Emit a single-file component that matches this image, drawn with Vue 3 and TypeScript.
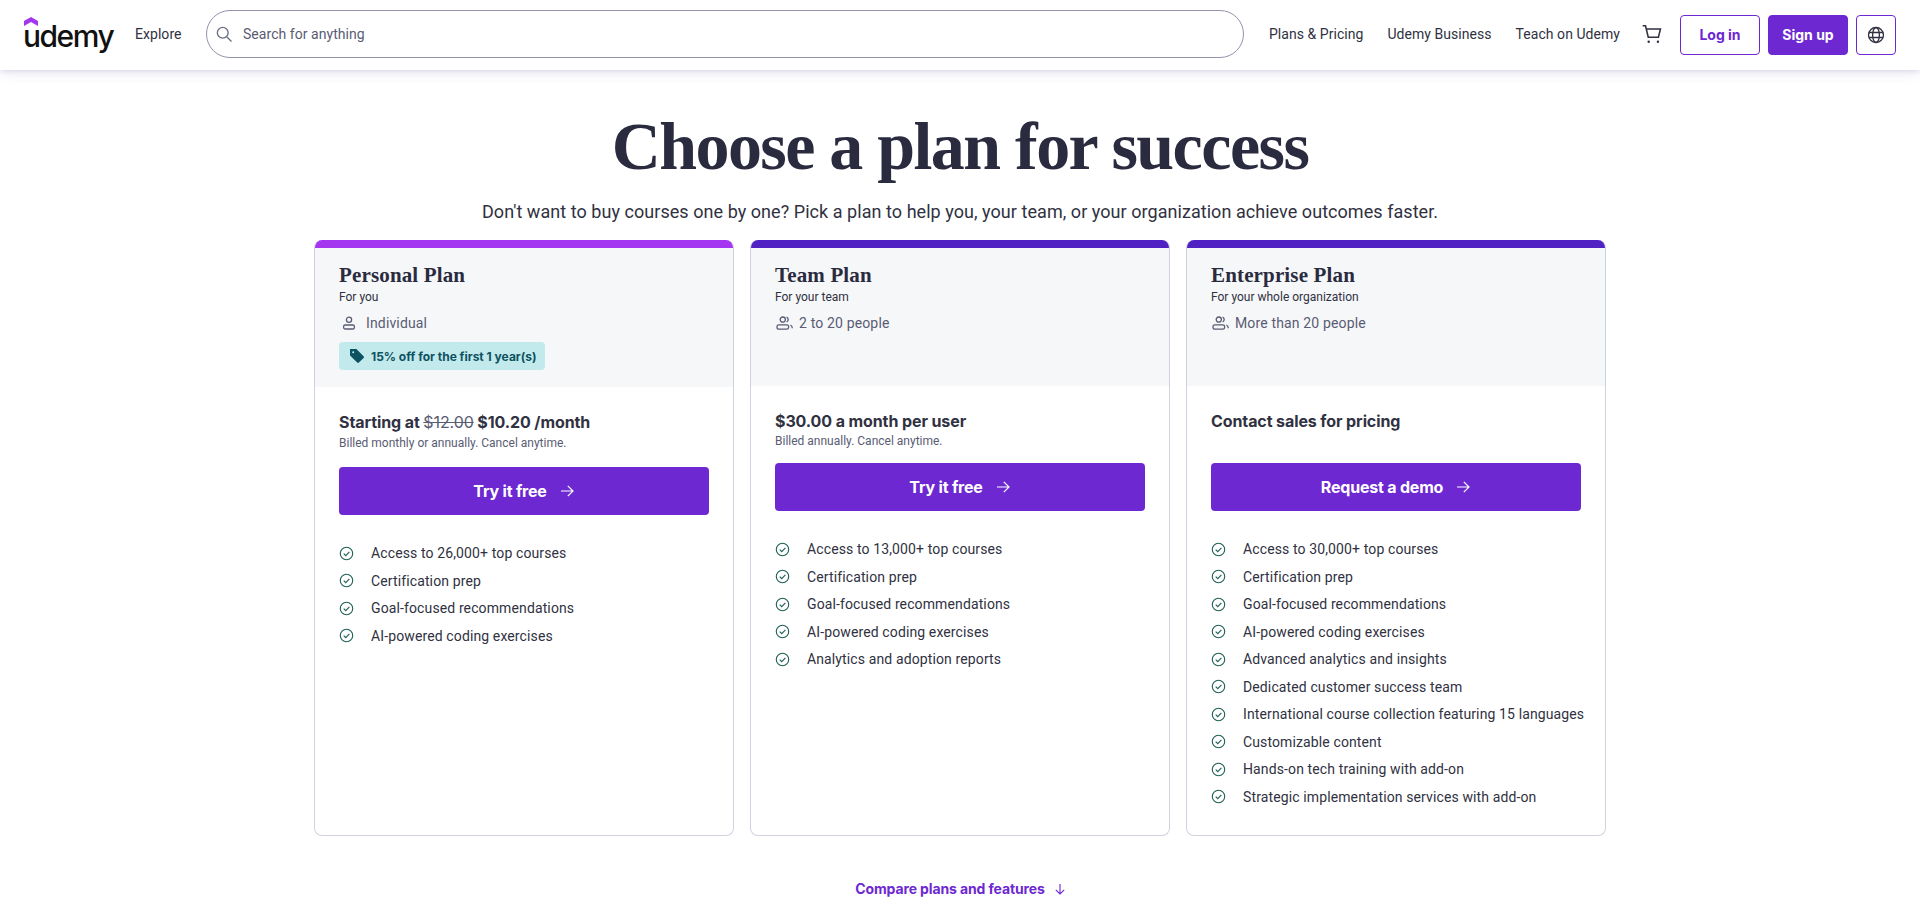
<script setup lang="ts">
interface Plan {
  name: string;
  audience: string;
  seats: string;
  solo: boolean;
  accent: string;
  badge?: string;
  cta: string;
  billed?: string;
  features: string[];
}

const plans: Plan[] = [
  {
    name: 'Personal Plan',
    audience: 'For you',
    seats: 'Individual',
    solo: true,
    accent: '#a435f0',
    badge: '15% off for the first 1 year(s)',
    cta: 'Try it free',
    billed: 'Billed monthly or annually. Cancel anytime.',
    features: [
      'Access to 26,000+ top courses',
      'Certification prep',
      'Goal-focused recommendations',
      'AI-powered coding exercises',
    ],
  },
  {
    name: 'Team Plan',
    audience: 'For your team',
    seats: '2 to 20 people',
    solo: false,
    accent: '#5022c3',
    cta: 'Try it free',
    billed: 'Billed annually. Cancel anytime.',
    features: [
      'Access to 13,000+ top courses',
      'Certification prep',
      'Goal-focused recommendations',
      'AI-powered coding exercises',
      'Analytics and adoption reports',
    ],
  },
  {
    name: 'Enterprise Plan',
    audience: 'For your whole organization',
    seats: 'More than 20 people',
    solo: false,
    accent: '#5022c3',
    cta: 'Request a demo',
    features: [
      'Access to 30,000+ top courses',
      'Certification prep',
      'Goal-focused recommendations',
      'AI-powered coding exercises',
      'Advanced analytics and insights',
      'Dedicated customer success team',
      'International course collection featuring 15 languages',
      'Customizable content',
      'Hands-on tech training with add-on',
      'Strategic implementation services with add-on',
    ],
  },
];
</script>

<template>
  <div class="page">
    <header class="topbar">
      <a class="logo">
        <svg class="logo-mark" width="14" height="9" viewBox="0 0 14 9"><path d="M7 0l7 4v5L7 5 0 9V4z" fill="#a435f0" /></svg>
        <span class="logo-text">udemy</span>
      </a>
      <span class="nav-link explore">Explore</span>
      <div class="search">
        <svg width="20" height="20" viewBox="0 0 24 24" fill="none" stroke="#6a6f85" stroke-width="1.6"><circle cx="10.5" cy="10.5" r="6.5" /><path d="M15.5 15.5L21 21" /></svg>
        <span class="placeholder">Search for anything</span>
      </div>
      <nav class="links">
        <span class="nav-link">Plans &amp; Pricing</span>
        <span class="nav-link">Udemy Business</span>
        <span class="nav-link">Teach on Udemy</span>
      </nav>
      <svg class="cart" width="22" height="22" viewBox="0 0 20 20" fill="none" stroke="#303141" stroke-width="1.4"><path d="M1.5 2.5h2.6L6.6 13h9.2l1.9-7.6H5" /><circle cx="7" cy="17" r="1.1" fill="#303141" stroke="none" /><circle cx="15.4" cy="17" r="1.1" fill="#303141" stroke="none" /></svg>
      <button class="btn-outline login">Log in</button>
      <button class="btn-solid signup">Sign up</button>
      <button class="btn-outline globe">
        <svg width="18" height="18" viewBox="0 0 18 18" fill="none" stroke="#303141" stroke-width="1.3"><circle cx="9" cy="9" r="7.5" /><ellipse cx="9" cy="9" rx="3.4" ry="7.5" /><path d="M1.8 6.5h14.4M1.8 11.5h14.4" /></svg>
      </button>
    </header>

    <main class="content">
      <h1 class="title">Choose a plan for success</h1>
      <p class="subtitle">Don't want to buy courses one by one? Pick a plan to help you, your team, or your organization achieve outcomes faster.</p>

      <section class="cards">
        <article v-for="plan in plans" :key="plan.name" class="card">
          <div class="strip" :style="{ background: plan.accent }"></div>
          <div class="card-head" :class="{ tall: plan.badge }">
            <h2 class="plan-name">{{ plan.name }}</h2>
            <p class="audience">{{ plan.audience }}</p>
            <div class="seats">
              <svg v-if="plan.solo" class="solo-icon" width="18" height="18" viewBox="0 0 18 18" fill="none" stroke="#595c73" stroke-width="1.3"><circle cx="9" cy="5.8" r="2.6" /><rect x="3.6" y="11" width="10.8" height="4" rx="1.6" /></svg>
              <svg v-else class="group-icon" width="18" height="18" viewBox="0 0 18 18" fill="none" stroke="#595c73" stroke-width="1.3"><circle cx="6.8" cy="5.6" r="2.6" /><rect x="1" y="10.8" width="11.6" height="4.4" rx="1.8" /><path d="M10.6 3.2a2.6 2.6 0 0 1 0 4.8M14.4 11c1.2.6 1.9 1.7 1.9 3.2" /></svg>
              <span>{{ plan.seats }}</span>
            </div>
            <div v-if="plan.badge" class="badge">
              <svg width="16" height="16" viewBox="0 0 16 16"><path d="M1 1h6.4l7.2 7.2a1.2 1.2 0 0 1 0 1.7l-4.7 4.7a1.2 1.2 0 0 1-1.7 0L1 7.4z" fill="#0d5261" /><circle cx="4.2" cy="4.2" r="1" fill="#c2e9eb" /></svg>
              <span>{{ plan.badge }}</span>
            </div>
          </div>
          <div class="card-body">
            <div class="pricing" :class="{ wide: plan.badge }">
              <p v-if="plan.solo" class="price">Starting at <s class="old">$12.00</s> $10.20 /month</p>
              <p v-else-if="plan.billed" class="price">$30.00 a month per user</p>
              <p v-else class="price">Contact sales for pricing</p>
              <p v-if="plan.billed" class="billed">{{ plan.billed }}</p>
            </div>
            <button class="cta">
              <span>{{ plan.cta }}</span>
              <svg width="16" height="16" viewBox="0 0 16 16" fill="none" stroke="#fff" stroke-width="1.2"><path d="M2 8h12M8.8 2.8L14 8l-5.2 5.2" /></svg>
            </button>
            <ul class="features">
              <li v-for="f in plan.features" :key="f" class="feature">
                <svg width="15" height="15" viewBox="0 0 14 14" fill="none" stroke="#1e6055" stroke-width="1.05"><circle cx="7" cy="7" r="5.8" /><path d="M4.4 7.1l1.9 1.9 3.4-3.6" /></svg>
                <span>{{ f }}</span>
              </li>
            </ul>
          </div>
        </article>
      </section>

      <a class="compare">
        <span>Compare plans and features</span>
        <svg width="14" height="14" viewBox="0 0 14 14" fill="none" stroke="#6d28d2" stroke-width="1.1"><path d="M7 2v10M2.8 7.8L7 12l4.2-4.2" /></svg>
      </a>
    </main>
  </div>
</template>

<style>
html, body { background: #fff; }
</style>

<style scoped>
.page {
  font-family: Roboto, "Noto Sans", sans-serif;
  color: #303141;
  height: 924px;
  overflow: hidden;
}
p, h1, h2, ul { margin: 0; padding: 0; }
.topbar {
  height: 70px;
  display: flex;
  align-items: center;
  padding: 0 24px;
  background: #fff;
  box-shadow: 0 2px 4px rgba(6, 17, 118, 0.08), 0 4px 12px rgba(6, 17, 118, 0.08);
  box-sizing: border-box;
}
.logo {
  position: relative;
  flex: none;
  width: 91px;
  height: 34px;
  display: block;
  margin-right: 20px;
}
.logo-mark { position: absolute; left: 0; top: -1px; }
.logo-text {
  position: absolute;
  left: -1px;
  top: 1px;
  font-family: Inter, sans-serif;
  font-size: 30px;
  line-height: 34px;
  font-weight: 500;
  color: #111;
  letter-spacing: -1.5px;
}
.nav-link { font-size: 14px; white-space: nowrap; color: #303141; margin-top: -2px; letter-spacing: 0.05px; }
.explore { flex: none; width: 48px; margin-right: 23px; }
.search {
  flex: 1;
  min-width: 0;
  height: 48px;
  margin-top: -2px;
  box-sizing: border-box;
  border: 1px solid #9194ac;
  border-radius: 24px;
  display: flex;
  align-items: center;
  gap: 9px;
  padding-left: 7px;
  margin-right: 25px;
}
.placeholder { font-size: 14px; color: #595c73; letter-spacing: 0.05px; }
.links { flex: none; display: flex; gap: 24px; }
.cart { flex: none; margin: -2px 17px 0 21px; }
button { font-family: Inter, sans-serif; cursor: pointer; }
.btn-outline, .btn-solid {
  flex: none;
  height: 40px;
  margin-top: -1px;
  box-sizing: border-box;
  border-radius: 4px;
  font-size: 14px;
  font-weight: 700;
  display: flex;
  align-items: center;
  justify-content: center;
  padding: 0;
}
.btn-outline { background: #fff; border: 1px solid #6d28d2; color: #6d28d2; }
.btn-solid { background: #6d28d2; border: 1px solid #6d28d2; color: #fff; }
.login { width: 80px; margin-right: 8px; }
.signup { width: 80px; margin-right: 8px; }
.globe { width: 40px; }
.content {
  display: flex;
  flex-direction: column;
  align-items: center;
}
.title {
  font-family: "Liberation Serif", serif;
  font-size: 68px;
  line-height: 76px;
  font-weight: 700;
  letter-spacing: -1.55px;
  color: #2a2b3f;
  margin-top: 38px;
}
.subtitle {
  font-size: 18px;
  line-height: 26px;
  margin-top: 15px;
  letter-spacing: 0.05px;
  color: #303141;
}
.cards {
  display: flex;
  gap: 16px;
  margin-top: 15px;
}
.card {
  width: 420px;
  height: 596px;
  box-sizing: border-box;
  border: 1px solid #d1d2e0;
  border-top: 0;
  border-radius: 8px;
  overflow: hidden;
  background: #fff;
}
.strip { height: 8px; margin: 0 -1px; }
.card-head {
  height: 138px;
  box-sizing: border-box;
  background: #f6f7f9;
  padding: 14px 24px 0;
}
.card-head.tall { height: 139px; }
.plan-name {
  font-family: "Liberation Serif", serif;
  font-size: 21px;
  line-height: 26px;
  font-weight: 700;
  letter-spacing: 0.15px;
  color: #2a2b3f;
}
.audience { font-size: 12px; line-height: 18px; color: #303141; }
.seats {
  display: flex;
  align-items: center;
  height: 24px;
  margin-top: 5px;
  font-size: 14px;
  letter-spacing: 0.15px;
  color: #595c73;
}
.solo-icon { margin: 0 8px 0 1px; }
.group-icon { margin: 0 5px 0 1px; }
.badge {
  display: inline-flex;
  align-items: center;
  gap: 6px;
  height: 28px;
  padding: 0 8px 0 10px;
  margin-top: 7px;
  border-radius: 4px;
  background: #c2e9eb;
  color: #0d5261;
  font-family: Inter, sans-serif;
  font-size: 12px;
  font-weight: 700;
}
.card-body { padding: 24px 24px 0; }
.pricing { height: 53px; }
.pricing.wide { height: 56px; }
.price { font-family: Inter, sans-serif; font-size: 16px; line-height: 22px; font-weight: 700; color: #303141; letter-spacing: -0.1px; }
.old { font-weight: 400; color: #595c73; }
.billed { font-size: 12px; line-height: 18px; color: #595c73; }
.pricing.wide .billed { line-height: 20px; }
.cta {
  width: 100%;
  height: 48px;
  border: 0;
  border-radius: 4px;
  background: #6d28d2;
  color: #fff;
  font-size: 16px;
  font-weight: 700;
  letter-spacing: -0.2px;
  display: flex;
  align-items: center;
  justify-content: center;
  gap: 12px;
}
.features { list-style: none; margin-top: 24.5px; }
.feature {
  display: flex;
  align-items: center;
  gap: 17px;
  height: 27.5px;
  font-size: 14px;
  letter-spacing: 0.12px;
  color: #303141;
  white-space: nowrap;
}
.feature svg { flex: none; }
.compare {
  display: flex;
  align-items: center;
  gap: 8px;
  margin-top: 44px;
  margin-left: 2px;
  font-family: Inter, sans-serif;
  font-size: 14px;
  font-weight: 700;
  letter-spacing: -0.12px;
  color: #6d28d2;
}
</style>
